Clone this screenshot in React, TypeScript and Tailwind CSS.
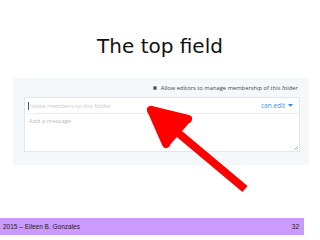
import React from "react";

export default function App() {
  return (
    <div className="relative w-[320px] h-[240px] bg-white overflow-hidden">
      <div className="h-[78px] pt-[32px] text-center text-[20px] leading-[28px] text-[#111]" style={{ fontFamily: '"DejaVu Sans", sans-serif' }}>
        The top field
      </div>
      <div className="ml-[13px] w-[296px] h-[87px] bg-[#f5f8fb] pl-[11px] pr-[9px] pt-[4px] text-[6px] leading-[8px]" style={{ fontFamily: '"Open Sans", sans-serif' }}>
        <div className="h-[11px] flex items-center justify-end gap-[4px] pr-[2px]">
          <div className="w-[4px] h-[4px] bg-[#555] border border-[#888] rounded-[1px]" />
          <span className="text-[5.8px] leading-[8px] text-[#444] whitespace-nowrap">Allow editors to manage membership of this folder</span>
        </div>
        <div className="mt-[4px] h-[55px] bg-white border border-[#e4e7ea] flex flex-col">
          <div className="h-[16px] border-b border-[#eceef0] flex items-center justify-between pl-[3px] pr-[6px]">
            <div className="flex items-center">
              <div className="w-[1px] h-[8px] bg-[#555] mr-[1px]" />
              <span className="text-[6px] leading-[8px] text-[#c4c8cc] whitespace-nowrap">Invite members to this folder</span>
            </div>
            <div className="flex items-center gap-[3px]">
              <span className="text-[6.5px] leading-[8px] text-[#3f8ee0] whitespace-nowrap">can edit</span>
              <svg width="5" height="3" viewBox="0 0 5 3"><path d="M0 0 L5 0 L2.5 3 Z" fill="#3f8ee0" /></svg>
            </div>
          </div>
          <div className="flex-1 relative pl-[4px] pt-[3px] text-[6px] leading-[8px]">
            <span className="text-[#b8bcc0] whitespace-nowrap">Add a message</span>
            <svg className="absolute right-[1px] bottom-[1px]" width="4" height="4" viewBox="0 0 4 4">
              <path d="M4 0 L0 4 M4 2 L2 4" stroke="#aaa" strokeWidth="0.7" />
            </svg>
          </div>
        </div>
      </div>
      <div className="mt-[53px] w-[304px] h-[17px] bg-[#cc99ff] flex items-center justify-between pl-[3px] pr-[5px] text-[6.5px] leading-[8px] text-[#222]" style={{ fontFamily: '"Liberation Sans", Arial, sans-serif' }}>
        <span>2015 – Eileen B. Gonzales</span>
        <span>32</span>
      </div>
      <svg className="absolute left-0 top-0 pointer-events-none" width="320" height="240" viewBox="0 0 320 240">
        <g stroke="#ff0000" strokeLinecap="round" strokeLinejoin="round" fill="#ff0000">
          <line x1="152" y1="111" x2="245" y2="189" strokeWidth="8" strokeLinecap="butt" />
          <polygon points="151,110 188,119 167,143" strokeWidth="7" />
          <line x1="151" y1="110" x2="188" y2="119" strokeWidth="8" />
          <line x1="151" y1="110" x2="166" y2="144" strokeWidth="8" />
        </g>
      </svg>
    </div>
  );
}
